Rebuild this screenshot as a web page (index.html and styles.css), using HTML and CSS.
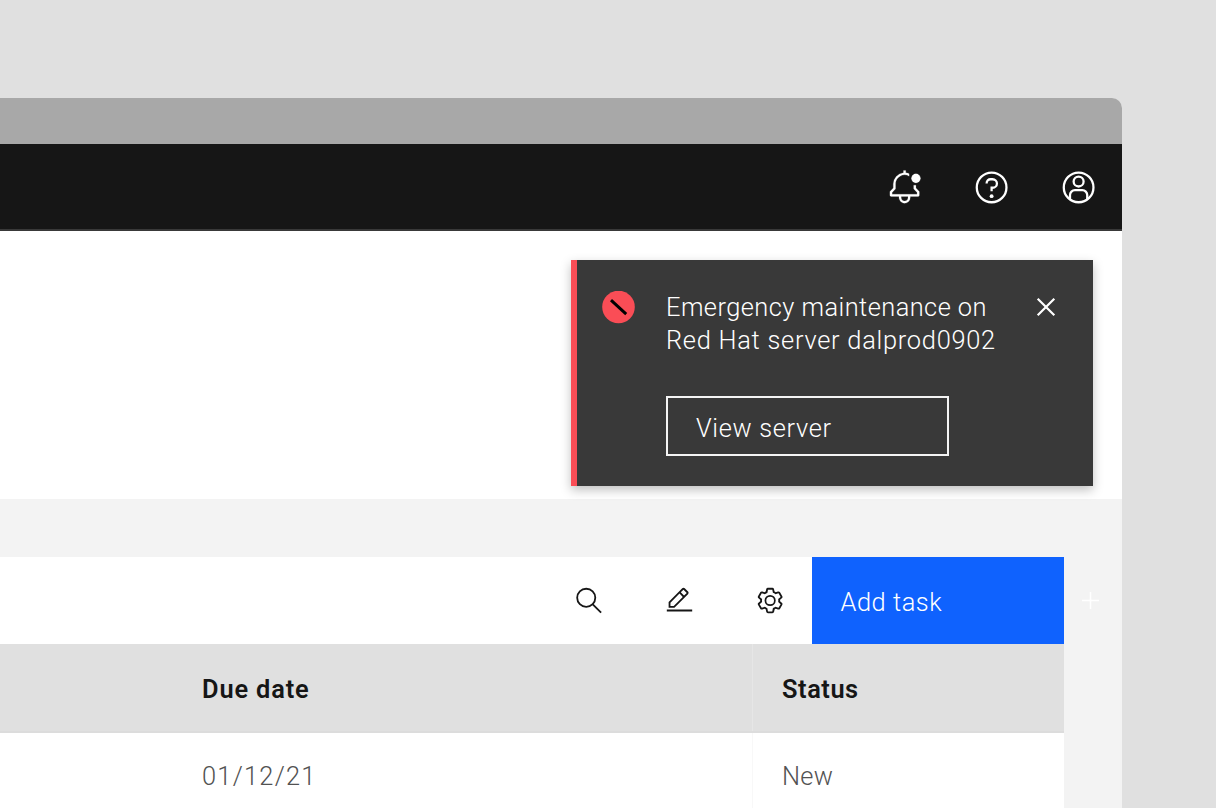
FILE: index.html
```html
<!DOCTYPE html>
<html lang="en">
<head>
<meta charset="utf-8">
<title>Tasks</title>
<link rel="stylesheet" href="styles.css">
</head>
<body>
<div class="window">
  <div class="titlebar"></div>
  <header class="header">
    <svg class="icon-lg bell" viewBox="0.45 -0.25 32 32"><path d="M26,16.5859V14h-2v3a1,1,0,0,0,.293.707L27,20.4141V22H5V20.4141l2.707-2.707A1,1,0,0,0,8,17V13a7.9849,7.9849,0,0,1,12-6.9282V3.8477a9.8958,9.8958,0,0,0-3-.7965V1H15V3.0508A10.0136,10.0136,0,0,0,6,13v3.5859L3.293,19.293A1,1,0,0,0,3,20v3a1,1,0,0,0,1,1h7v.7768a5.152,5.152,0,0,0,4.5,5.1987A5.0057,5.0057,0,0,0,21,25V24h7a1,1,0,0,0,1-1V20a1,1,0,0,0-.293-.707ZM19,25a3,3,0,0,1-6,0V24h6Z"/><circle cx="26" cy="8" r="4"/></svg>
    <svg class="icon-lg line" viewBox="0.45 -0.25 32 32"><circle cx="16" cy="16" r="13.1"/><path d="M11.6 12.6v-.3c0-2 1.5-3.5 3.5-3.5h1.7c2.2 0 3.9 1.6 3.9 3.7s-1.7 3.8-3.9 3.8H16v3.2"/><circle class="dot" cx="16" cy="23.7" r="1.7"/></svg>
    <svg class="icon-lg line" viewBox="0.45 -0.25 32 32"><circle cx="16" cy="16" r="13.1"/><circle cx="16" cy="10.8" r="4.4"/><path d="M8.4 26.6V22.8a4.3 4.3 0 0 1 4.3-4.3h6.6a4.3 4.3 0 0 1 4.3 4.3v3.8"/></svg>
  </header>
  <section class="hero">
    <div class="toast">
      <svg class="status" viewBox="0 0 33 33"><circle cx="16.5" cy="16" r="16.3"/><path d="M9 9.2 24.2 23.2"/></svg>
      <div class="message">
        <p class="first">Emergency maintenance on</p>
        <p class="second">Red Hat server dalprod0902</p>
        <button class="view">View server</button>
      </div>
      <svg class="close" viewBox="0 0 20 20"><path d="M1.7 1.7 18.3 18.3M18.3 1.7 1.7 18.3"/></svg>
    </div>
  </section>
  <main class="content">
    <div class="toolbar">
      <svg class="icon-sm line" viewBox="-0.5 0 32 32"><circle cx="13" cy="13" r="10"/><path d="M20.2 20.2 29.4 29.4"/></svg>
      <svg class="icon-sm" viewBox="0 0 32 32"><path d="M2 26H30V28H2zM25.4,9c.8-.8.8-2,0-2.8L21.8,2.6c-.8-.8-2-.8-2.8,0L4,17.6V24h6.4L25.4,9zM20.4,4L24,7.6l-3,3L17.4,7L20.4,4zM6,22v-3.6l10-10l3.6,3.6l-10,10H6z"/></svg>
      <svg class="icon-sm" viewBox="0.4 0 32 32"><path d="M27,16.76c0-.25,0-.5,0-.76s0-.51,0-.77l1.92-1.68A2,2,0,0,0,29.3,11L26.94,7a2,2,0,0,0-1.73-1,2,2,0,0,0-.64.1l-2.43.82a11.35,11.35,0,0,0-1.31-.75l-.51-2.52a2,2,0,0,0-2-1.61H13.64a2,2,0,0,0-2,1.61l-.51,2.52a11.48,11.48,0,0,0-1.32.75L7.43,6.06A2,2,0,0,0,6.79,6,2,2,0,0,0,5.06,7L2.7,11a2,2,0,0,0,.41,2.51L5,15.24c0,.25,0,.5,0,.76s0,.51,0,.77L3.11,18.45A2,2,0,0,0,2.7,21L5.06,25a2,2,0,0,0,1.73,1,2,2,0,0,0,.64-.1l2.43-.82a11.35,11.35,0,0,0,1.31.75l.51,2.52a2,2,0,0,0,2,1.61h4.72a2,2,0,0,0,2-1.61l.51-2.52a11.48,11.48,0,0,0,1.32-.75l2.42.82a2,2,0,0,0,.64.1,2,2,0,0,0,1.73-1L29.3,21a2,2,0,0,0-.41-2.51ZM25.21,24l-3.43-1.16a8.86,8.86,0,0,1-2.71,1.57L18.36,28H13.64l-.71-3.55a9.36,9.36,0,0,1-2.7-1.57L6.79,24,4.43,20l2.72-2.4a8.9,8.9,0,0,1,0-3.13L4.43,12,6.79,8l3.43,1.16a8.86,8.86,0,0,1,2.71-1.57L13.64,4h4.72l.71,3.55a9.36,9.36,0,0,1,2.7,1.57L25.21,8,27.57,12l-2.72,2.4a8.9,8.9,0,0,1,0,3.13L27.57,20Z"/><circle class="ring" cx="16" cy="16" r="5.2"/></svg>
      <button class="add"><span>Add task</span>
        <svg class="plus" viewBox="0 0 18 17"><path d="M8.5 0V17M0 8.5H17"/></svg>
      </button>
    </div>
    <div class="row head"><div class="cell date"><span class="due">Due date</span></div><div class="cell"><span class="state">Status</span></div></div>
    <div class="row"><div class="cell date"><span class="day">01/12/21</span></div><div class="cell"><span class="new">New</span></div></div>
  </main>
</div>
</body>
</html>
```
FILE: styles.css
```css
* { box-sizing: border-box; }
body {
  margin: 0;
  padding-top: 98px;
  height: 808px;
  overflow: hidden;
  background: #e0e0e0;
  font: 350 25.4px/33px Roboto, "Liberation Sans", sans-serif;
  color: #161616;
}
p { margin: 0; }
svg { display: block; flex: none; fill: currentColor; }
button { font: inherit; color: #fff; text-align: left; border: 0; border-radius: 0; }
.window { width: 1122px; height: 710px; background: #f3f3f3; border-top-right-radius: 10px; }
.titlebar { height: 46px; background: #a8a8a8; border-top-right-radius: 10px; }
.header {
  height: 87px;
  padding: 0 25px 0 0;
  display: flex;
  justify-content: flex-end;
  align-items: center;
  gap: 50.75px;
  background: #161616;
  border-bottom: 2px solid #393939;
  color: #fff;
}
.icon-lg { width: 36.25px; height: 36.25px; margin-top: 2px; }
.bell { stroke: currentColor; stroke-width: .15; }
.icon-sm { width: 29px; height: 29px; margin-right: 62px; }
.line { fill: none; stroke: currentColor; stroke-width: 2; }
.dot { fill: currentColor; stroke: none; }
.hero {
  height: 268px;
  padding: 29px 29px 0 0;
  display: flex;
  justify-content: flex-end;
  align-items: flex-start;
  background: #fff;
}
.toast {
  width: 522px;
  height: 226px;
  display: flex;
  padding: 31px 37px 0 25px;
  border-left: 6px solid #fa4d56;
  background: #393939;
  color: #fff;
  box-shadow: 0 3.6px 10px rgba(0, 0, 0, .25);
}
.status { width: 33px; height: 33px; fill: #fa4d56; }
.status path { stroke: #000; stroke-width: 3; }
.message { flex: 1; padding-left: 31px; white-space: nowrap; }
.first { letter-spacing: .45px; }
.second { letter-spacing: .74px; }
.view {
  display: block;
  width: 283px;
  height: 60px;
  margin-top: 39px;
  padding: 4px 28px 0;
  background: transparent;
  border: 2px solid #f4f4f4;
  letter-spacing: .68px;
}
.close { width: 20px; height: 20px; margin-top: 6px; fill: none; stroke: currentColor; stroke-width: 2.2; }
.content { width: 1064px; padding-top: 58px; }
.toolbar {
  height: 87px;
  display: flex;
  justify-content: flex-end;
  align-items: center;
  background: #fff;
}
.toolbar .icon-sm:nth-child(3) { margin-right: 27px; }
.ring { fill: none; stroke: currentColor; stroke-width: 1.9; }
.add {
  width: 252.5px;
  height: 87px;
  flex: none;
  display: flex;
  align-items: center;
  padding: 4px 0 0 29px;
  background: #0f62fe;
  letter-spacing: .55px;
}
.add span { width: 241.5px; flex: none; }
.plus { width: 18px; height: 17px; margin-top: -4px; fill: none; stroke: #fff; stroke-width: 1.6; }
.row { display: flex; height: 90px; background: #fff; color: #525252; letter-spacing: .55px; }
.head { height: 89px; background: #e0e0e0; color: #161616; font-weight: 650; border-bottom: 2px solid #dcdcdc; }
.cell { flex: 1; padding: 27px 0 0 29px; }
.head .cell { padding-top: 29px; }
.date { flex: none; width: 753px; padding-left: 202px; border-right: 1px solid #f8f8f8; }
.head .date { border-color: #e6e6e6; }
.due { letter-spacing: .85px; }
.day { letter-spacing: 1.25px; }
.new { letter-spacing: .3px; }
```
